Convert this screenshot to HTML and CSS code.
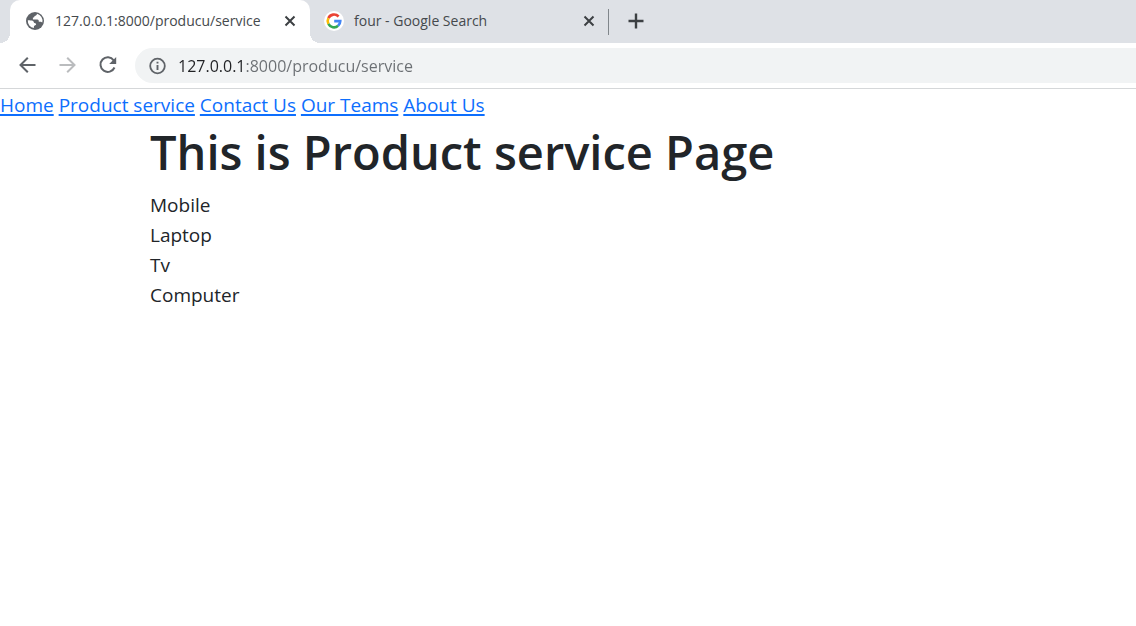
FILE: index.html
```html
<!DOCTYPE html>
<html lang="en">
<head>
<meta charset="utf-8">
<meta name="viewport" content="width=device-width, initial-scale=1">
<title>127.0.0.1:8000/producu/service</title>
<link rel="stylesheet" href="styles.css">
</head>
<body>
<header class="browser">
  <div class="tab-strip">
    <div class="tab tab-active">
      <button class="tab-title" type="button">
        <svg class="favicon" viewBox="0 0 20 20" aria-hidden="true">
          <circle cx="10" cy="10" r="9" fill="#5f6368"/>
          <path d="M12 2.7c-.3 1.5-1 2-2.4 2.2-.5 1-.3 1.500-1.700 1.700v2h4.400c1.200 0 1.500.8 1.500 2.200h1.500c.9 0 1.300.4 2 .6A7.300 7.300 0 0 0 12 2.700zM2.800 9.300c1.800.1 4.300.1 5.200.6 1 .6.500 1.700 1.600 2 1 .3 1.600.6 1.500 1.600-.1.900-1.700.8-2.100 1.600-.2.600 0 1.300-.1 2A7.300 7.300 0 0 1 2.800 9.300z" fill="#fff"/>
        </svg>
        <span>127.0.0.1:8000/producu/service</span>
      </button>
      <button class="icon-button tab-close" type="button" aria-label="Close tab">
        <svg viewBox="0 0 20 20" width="20" height="20"><path d="M5.500 5.500l9 9M14.500 5.500l-9 9" stroke="#3c4043" stroke-width="2" fill="none"/></svg>
      </button>
    </div>
    <div class="tab">
      <button class="tab-title" type="button">
        <svg class="favicon" viewBox="0 0 20 20" aria-hidden="true">
          <circle cx="10" cy="10" r="10" fill="#fff"/>
          <g fill="none" stroke-width="2.600">
            <path d="M14.600 5.500A6.300 6.300 0 0 0 4.400 7.100" stroke="#ea4335"/>
            <path d="M4.400 7.100a6.300 6.300 0 0 0 0 5.800" stroke="#fbbc05"/>
            <path d="M4.400 12.900a6.300 6.300 0 0 0 9.700 1.900" stroke="#34a853"/>
            <path d="M14.100 14.800A6.300 6.300 0 0 0 16.300 10.100H10.200" stroke="#4285f4"/>
          </g>
        </svg>
        <span>four - Google Search</span>
      </button>
      <button class="icon-button tab-close" type="button" aria-label="Close tab">
        <svg viewBox="0 0 20 20" width="20" height="20"><path d="M5.500 5.500l9 9M14.500 5.500l-9 9" stroke="#3c4043" stroke-width="2" fill="none"/></svg>
      </button>
    </div>
    <button class="icon-button new-tab" type="button" aria-label="New tab">
      <svg viewBox="0 0 20 20" width="20" height="20"><path d="M10 2.500v15M2.500 10h15" stroke="#3c4043" stroke-width="2.400" fill="none"/></svg>
    </button>
  </div>
  <div class="toolbar">
    <button class="icon-button" type="button" aria-label="Back">
      <svg viewBox="0 0 20 20" width="20" height="20"><path d="M17.500 9H2.500M9.800 1.700L2.500 9l7.300 7.300" stroke="#5f6368" stroke-width="2" fill="none"/></svg>
    </button>
    <button class="icon-button" type="button" aria-label="Forward">
      <svg viewBox="0 0 20 20" width="20" height="20"><path d="M1.500 9h15M9.200 1.700L16.500 9l-7.300 7.300" stroke="#babcbe" stroke-width="2" fill="none"/></svg>
    </button>
    <button class="icon-button" type="button" aria-label="Reload">
      <svg viewBox="0 0 20 20" width="20" height="20"><path d="M15.700 4.300A7.300 7.300 0 1 0 16.500 11.500" stroke="#5f6368" stroke-width="2" fill="none"/><path d="M18.200 1v7h-7z" fill="#5f6368"/></svg>
    </button>
    <div class="address-bar">
      <button class="icon-button" type="button" aria-label="Site information">
        <svg viewBox="0 0 18 18" width="18" height="18"><circle cx="8.500" cy="9" r="7.300" stroke="#5f6368" stroke-width="1.800" fill="none"/><path d="M8.500 8v5M8.500 4.800v1.800" stroke="#5f6368" stroke-width="1.900"/></svg>
      </button>
      <input class="address-input" type="text" aria-label="Address" value="127.0.0.1:8000/producu/service" spellcheck="false">
    </div>
  </div>
</header>
<nav class="site-nav">
  <a href="#">Home</a>
  <a href="#">Product service</a>
  <a href="#">Contact Us</a>
  <a href="#">Our Teams</a>
  <a href="#">About Us</a>
</nav>
<main class="content">
  <h1>This is Product service Page</h1>
  <ul class="products">
    <li>Mobile</li>
    <li>Laptop</li>
    <li>Tv</li>
    <li>Computer</li>
  </ul>
</main>
</body>
</html>
```
FILE: styles.css
```css
* {
  box-sizing: border-box;
}

body {
  margin: 0;
  background: #fff;
  color: #212529;
  font-family: "Segoe UI", "Open Sans", "Noto Sans", sans-serif;
  font-size: 19px;
  line-height: 30px;
}

button,
input {
  margin: 0;
  padding: 0;
  border: 0;
  background: none;
  font: inherit;
  color: inherit;
}

svg {
  display: block;
  flex: none;
}

.browser {
  border-bottom: 1px solid #d5d7d9;
}

.tab-strip {
  display: flex;
  height: 43px;
  padding-left: 10px;
  background: #dee1e6;
}

.tab {
  position: relative;
  display: flex;
  align-items: center;
  flex: 0 1 299px;
  min-width: 0;
  padding: 0 10px 2px 14px;
  color: #45494d;
  font-size: 14px;
  line-height: 20px;
}

.tab:not(.tab-active)::after {
  content: "";
  position: absolute;
  top: 9px;
  right: 0;
  width: 1px;
  height: 26px;
  background: #80868b;
}

.tab-active {
  flex-basis: 300px;
  padding-left: 15px;
  border-radius: 10px 10px 0 0;
  background: #fff;
}

.tab-active::before,
.tab-active::after {
  content: "";
  position: absolute;
  bottom: 0;
  width: 10px;
  height: 10px;
}

.tab-active::before {
  right: 100%;
  background: radial-gradient(circle at 0 0, transparent 10px, #fff 10px);
}

.tab-active::after {
  left: 100%;
  background: radial-gradient(circle at 100% 0, transparent 10px, #fff 10px);
}

.tab-title {
  display: flex;
  align-items: center;
  flex: 1;
  gap: 10px;
  min-width: 0;
  text-align: left;
  white-space: nowrap;
}

.favicon {
  width: 20px;
  height: 20px;
}

.icon-button {
  display: grid;
  flex: none;
  place-items: center;
}

.new-tab {
  margin-left: 17px;
  padding-bottom: 2px;
}

.toolbar {
  display: flex;
  align-items: center;
  gap: 20px;
  padding: 5px 0 5px 18px;
}

.address-bar {
  display: flex;
  align-items: center;
  flex: 1;
  gap: 11px;
  height: 35px;
  margin-left: -3px;
  padding-left: 14px;
  border-radius: 18px 0 0 18px;
  background: #f1f3f4;
}

.address-input {
  flex: 1;
  min-width: 0;
  background: linear-gradient(to right, #202124 67px, #6b6f73 67px);
  background-clip: text;
  color: transparent;
  caret-color: #202124;
  font-size: 16px;
  line-height: 24px;
}

.site-nav {
  padding-top: 1px;
}

.site-nav a {
  color: #0d6efd;
  text-decoration-thickness: 2px;
  text-underline-offset: 2px;
}

.content {
  padding-left: 150px;
}

h1 {
  margin: 0 0 6px;
  font-size: 47px;
  font-weight: 600;
  line-height: 64px;
}

.products {
  margin: 0;
  padding: 0;
  list-style: none;
}
```
